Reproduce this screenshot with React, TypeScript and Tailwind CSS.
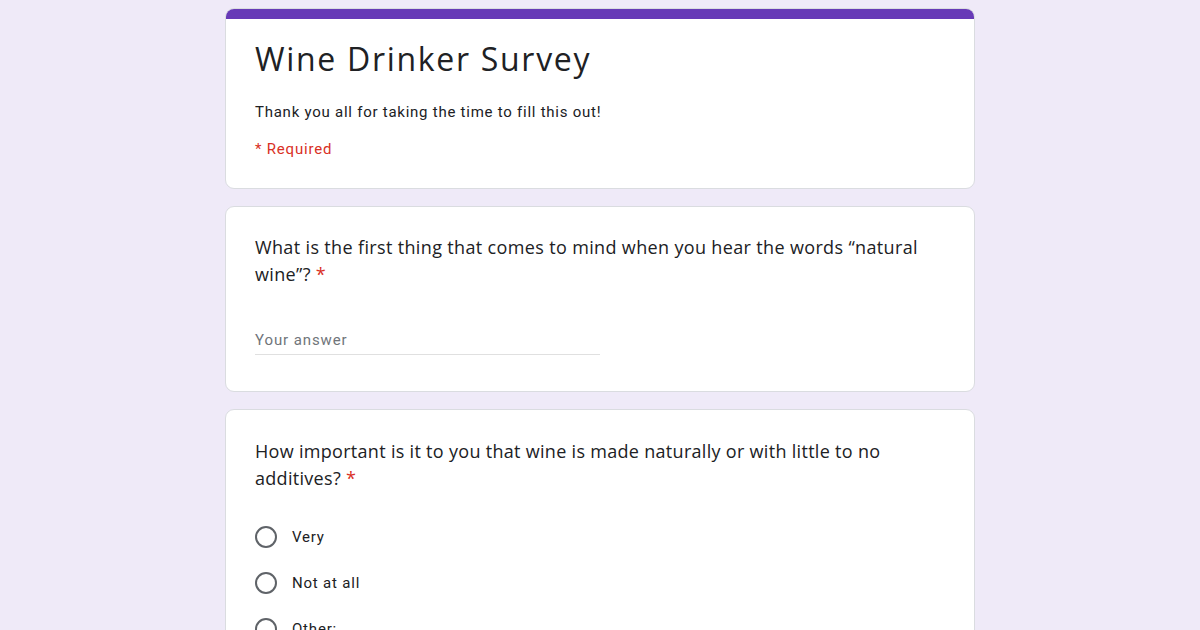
import React from "react";

function Radio({ label }: { label: string }) {
  return (
    <div className="flex items-center h-[46px]">
      <span className="w-[22px] h-[22px] rounded-full border-2 border-[#5f6368] shrink-0" />
      <span className="ml-[15px] text-[15px] tracking-[0.8px] text-[#202124]">{label}</span>
    </div>
  );
}

export default function App() {
  return (
    <div className="h-[630px] bg-[#efeaf8] pt-2 font-['Roboto',sans-serif] overflow-hidden">
      <div className="w-[750px] mx-auto flex flex-col gap-[17px]">
        <div className="bg-white rounded-[9px] border border-[#dadce0] overflow-hidden">
          <div className="h-[10px] bg-[#673ab7]" />
          <div className="px-[29px] pt-[20px] pb-[29px]">
            <h1 className="text-[32px] leading-[40px] tracking-[1.7px] text-[#202124] font-['Open_Sans',sans-serif]">
              Wine Drinker Survey
            </h1>
            <p className="mt-[23px] text-[15px] leading-[20px] tracking-[0.75px] text-[#202124]">
              Thank you all for taking the time to fill this out!
            </p>
            <p className="mt-[17px] text-[15px] leading-[20px] tracking-[0.8px] text-[#d93025]">* Required</p>
          </div>
        </div>

        <div className="bg-white rounded-[9px] border border-[#dadce0] px-[29px] pt-[27px] pb-[36px]">
          <p className="text-[18px] leading-[27px] tracking-[0.35px] text-[#202124] font-['Open_Sans',sans-serif]">
            What is the first thing that comes to mind when you hear the words “natural wine”?{" "}
            <span className="text-[#d93025]">*</span>
          </p>
          <div className="mt-[42px] w-[345px] border-b border-[#e0e0e0] pb-[4px] leading-[20px]">
            <span className="block text-[15px] leading-[20px] tracking-[0.9px] text-[#70757a]">Your answer</span>
          </div>
        </div>

        <div className="bg-white rounded-[9px] border border-[#dadce0] px-[29px] pt-[28px] pb-[30px]">
          <p className="text-[18px] leading-[27px] tracking-[0.3px] text-[#202124] font-['Open_Sans',sans-serif] pr-[30px]">
            How important is it to you that wine is made naturally or with little to no additives?{" "}
            <span className="text-[#d93025]">*</span>
          </p>
          <div className="mt-[22px] flex flex-col">
            <Radio label="Very" />
            <Radio label="Not at all" />
            <Radio label="Other:" />
          </div>
        </div>
      </div>
    </div>
  );
}
